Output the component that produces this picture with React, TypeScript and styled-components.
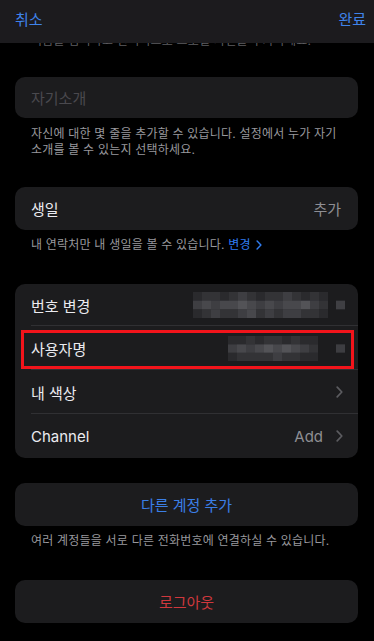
import React from "react";
import styled, { createGlobalStyle } from "styled-components";

const Global = createGlobalStyle`
  html, body { margin: 0; padding: 0; background: #000; }
  body {
    font-family: "Inter", "Noto Sans CJK KR", sans-serif;
    -webkit-font-smoothing: antialiased;
  }
`;

const Page = styled.div`
  position: relative;
  width: 374px;
  height: 641px;
  overflow: hidden;
  background: #000;
`;

const NavBar = styled.header`
  position: absolute;
  top: 0;
  left: 0;
  right: 0;
  height: 43px;
  z-index: 2;
  box-sizing: border-box;
  padding: 10px 8px 0 15px;
  display: flex;
  justify-content: space-between;
  align-items: flex-start;
  background: #1c1b1e;
`;

const NavButton = styled.span`
  font-size: 15px;
  line-height: 20px;
  color: #3f83ea;
`;

const Content = styled.main`
  display: flex;
  flex-direction: column;
  padding: 33px 16px 0 15px;
`;

const Note = styled.p<{ $top?: number; $faded?: boolean }>`
  margin: ${(p) => p.$top ?? 0}px 0 0;
  padding: 0 12px 0 16px;
  font-size: 12px;
  line-height: 16px;
  letter-spacing: 0.2px;
  word-break: keep-all;
  color: ${(p) => (p.$faded ? "#5e5e62" : "#98989d")};
`;

const NoteLink = styled.span`
  color: #2f7cf0;
  display: inline-flex;
  align-items: center;
  gap: 5px;
`;

const Card = styled.section<{ $top: number }>`
  margin-top: ${(p) => p.$top}px;
  background: #1c1c1e;
  border-radius: 10px;
  overflow: visible;
  display: flex;
  flex-direction: column;
`;

const Row = styled.div<{ $h: number; $sep?: boolean; $pr?: number }>`
  position: relative;
  height: ${(p) => p.$h}px;
  display: flex;
  align-items: center;
  justify-content: space-between;
  padding: 0 ${(p) => p.$pr ?? 17}px 0 16px;
  font-size: 15px;
  color: #ebebf0;
  &::after {
    content: "";
    display: ${(p) => (p.$sep ? "block" : "none")};
    position: absolute;
    left: 16px;
    right: 0;
    bottom: 0;
    height: 1px;
    background: #303033;
  }
`;

const Placeholder = styled.span`
  color: #4a494e;
`;

const Value = styled.span`
  display: flex;
  align-items: center;
  gap: 13px;
  color: #8e8e93;
`;

const ActionRow = styled.button<{ $color: string }>`
  height: 43px;
  border: 0;
  background: transparent;
  font-family: inherit;
  font-size: 15px;
  color: ${(p) => p.$color};
  display: flex;
  align-items: center;
  justify-content: center;
  padding: 0;
`;

const Highlight = styled.div`
  position: absolute;
  left: 6px;
  right: 4px;
  top: 4px;
  bottom: 1px;
  border: 3px solid #f2141b;
  pointer-events: none;
`;

const MosaicWrap = styled.span`
  display: flex;
  align-items: center;
`;

const Chevron = ({ color = "#5c5c60", w = 7, h = 12 }: { color?: string; w?: number; h?: number }) => (
  <svg width={w} height={h} viewBox="0 0 7 12" fill="none">
    <path d="M1.2 1.2L5.8 6L1.2 10.8" stroke={color} strokeWidth="1.7" strokeLinecap="round" strokeLinejoin="round" />
  </svg>
);

const Mosaic = ({ grid, extra, w, h }: { grid: string[][]; extra: string; w: number; h: number }) => {
  const cw = 9;
  const ch = h / grid.length;
  return (
    <svg width={w} height={h} viewBox={`0 0 ${w} ${h}`}>
      {grid.map((r, ri) =>
        r.map((c, ci) => (
          <rect key={`${ri}-${ci}`} x={ci * cw} y={ri * ch} width={cw} height={ch + 0.3} fill={c} />
        ))
      )}
      <rect x={w - 9} y={ch} width={9} height={ch} fill={extra} />
    </svg>
  );
};

const A = "#2a2a2d";
const B = "#333336";
const C = "#3e3e42";
const D = "#48484c";
const E = "#535357";

const grid1 = [
  [A, B, B, A, B, C, B, A, B, B, C, B, A, B, A],
  [C, D, C, D, D, E, D, C, D, C, D, D, E, C, B],
  [A, B, C, B, B, C, D, B, C, B, C, C, B, B, A],
];

const grid2 = [
  [A, A, B, A, B, B, A, B, A, A],
  [C, D, C, D, E, D, E, D, C, B],
  [A, B, B, B, B, C, B, B, A, A],
];

export default function App() {
  return (
    <Page>
      <Global />
      <NavBar>
        <NavButton>취소</NavButton>
        <NavButton>완료</NavButton>
      </NavBar>
      <Content>
        <Note $faded>이름을 입력하고 선택적으로 프로필 사진을 추가하세요.</Note>

        <Card $top={28}>
          <Row $h={41}>
            <Placeholder>자기소개</Placeholder>
          </Row>
        </Card>
        <Note $top={8}>
          자신에 대한 몇 줄을 추가할 수 있습니다. 설정에서 누가 자기 소개를 볼 수 있는지 선택하세요.
        </Note>

        <Card $top={29}>
          <Row $h={43}>
            <span>생일</span>
            <Value>추가</Value>
          </Row>
        </Card>
        <Note $top={7}>
          내 연락처만 내 생일을 볼 수 있습니다.{" "}
          <NoteLink>
            변경
            <Chevron color="#2f7cf0" w={6} h={10} />
          </NoteLink>
        </Note>

        <Card $top={31}>
          <Row $h={42} $sep $pr={13}>
            <span>번호 변경</span>
            <MosaicWrap>
              <Mosaic grid={grid1} extra="#3f3f43" w={152} h={26} />
            </MosaicWrap>
          </Row>
          <Row $h={44} $sep $pr={13}>
            <span>사용자명</span>
            <MosaicWrap>
              <Mosaic grid={grid2} extra="#3d3d41" w={117} h={25} />
            </MosaicWrap>
            <Highlight />
          </Row>
          <Row $h={44} $sep $pr={15}>
            <span>내 색상</span>
            <Value>
              <Chevron />
            </Value>
          </Row>
          <Row $h={44} $pr={15}>
            <span>Channel</span>
            <Value>
              Add
              <Chevron />
            </Value>
          </Row>
        </Card>

        <Card $top={25}>
          <ActionRow $color="#3b7fe6">다른 계정 추가</ActionRow>
        </Card>
        <Note $top={7}>여러 계정들을 서로 다른 전화번호에 연결하실 수 있습니다.</Note>

        <Card $top={31}>
          <ActionRow $color="#d0383d">로그아웃</ActionRow>
        </Card>
      </Content>
    </Page>
  );
}
